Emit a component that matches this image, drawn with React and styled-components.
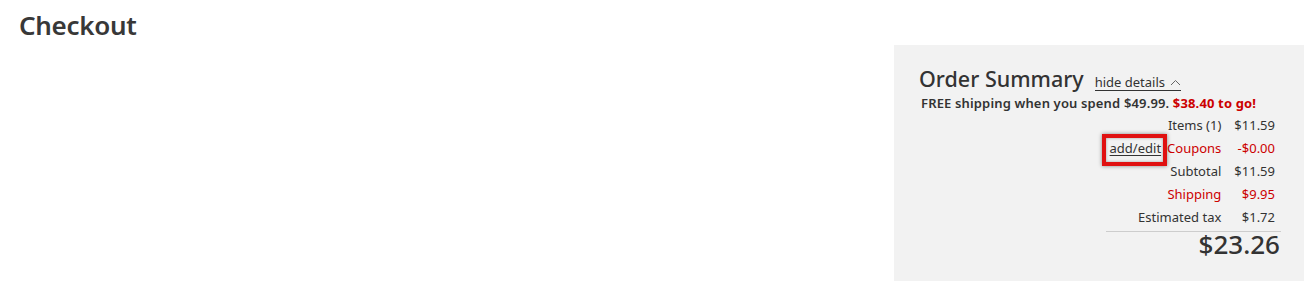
import React from "react";
import styled, { createGlobalStyle } from "styled-components";

const Global = createGlobalStyle`
  html, body { margin: 0; padding: 0; background: #fff; }
  body { font-family: "Noto Sans", "Open Sans", sans-serif; color: #333; }
`;

const Page = styled.div`
  width: 1316px;
  height: 287px;
  box-sizing: border-box;
  padding: 6px 12px 0 19px;
  display: flex;
  flex-direction: column;
`;

const Title = styled.h1`
  margin: 0;
  font-size: 26px;
  line-height: 38px;
  font-weight: 600;
  color: #383838;
  letter-spacing: -0.3px;
`;

const Content = styled.div`
  display: flex;
  justify-content: flex-end;
`;

const Panel = styled.section`
  width: 410px;
  height: 236px;
  margin-top: 1px;
  box-sizing: border-box;
  background: #f2f2f2;
  padding: 19px 24px 0 25px;
  display: flex;
  flex-direction: column;
`;

const HeadRow = styled.div`
  display: flex;
  align-items: baseline;
  gap: 11px;
`;

const PanelTitle = styled.h2`
  margin: 0;
  font-size: 21.5px;
  line-height: 30px;
  font-weight: 500;
  color: #333;
`;

const Toggle = styled.a`
  font-size: 13px;
  color: #333;
  display: inline-flex;
  align-items: center;
  gap: 5px;
  border-bottom: 1px solid #333;
  line-height: 16px;
  cursor: pointer;
`;

const Promo = styled.p`
  margin: 0 0 0 2px;
  font-size: 13px;
  line-height: 18px;
  font-weight: 600;
  letter-spacing: 0.15px;
  color: #333;
`;

const Red = styled.span`
  color: #cc0000;
  font-weight: 700;
`;

const Rows = styled.div`
  margin-top: 2px;
  display: grid;
  grid-template-columns: 1fr auto;
  column-gap: 11px;
  padding-right: 5px;
`;

const Label = styled.div`
  font-size: 13px;
  line-height: 23px;
  text-align: right;
  color: ${(p) => (p.$red ? "#cc0000" : "#333")};
  display: flex;
  justify-content: flex-end;
  align-items: center;
  gap: 6px;
  padding-right: 2px;
`;

const Value = styled.div`
  font-size: 13px;
  line-height: 23px;
  text-align: right;
  color: ${(p) => (p.$red ? "#cc0000" : "#333")};
`;

const EditLink = styled.a`
  position: relative;
  color: #333;
  text-decoration: underline;
  text-underline-offset: 2px;
  cursor: pointer;
`;

const Highlight = styled.span`
  position: absolute;
  left: -8px;
  right: -6px;
  top: -3px;
  bottom: -6px;
  border: 4px solid #e01010;
  box-shadow: 0 0 4px rgba(0, 0, 0, 0.45), inset 0 0 3px rgba(0, 0, 0, 0.35);
  pointer-events: none;
`;

const TotalBox = styled.div`
  margin-left: 187px;
  width: 174px;
  border-top: 1px solid #cdcdcd;
  margin-top: 2px;
  text-align: right;
  font-size: 26px;
  line-height: 24px;
  font-weight: 500;
  color: #333;
  padding-right: 1px;
`;

const rows = [
  { label: "Items (1)", value: "$11.59" },
  { label: "Coupons", value: "-$0.00", red: true, edit: true },
  { label: "Subtotal", value: "$11.59" },
  { label: "Shipping", value: "$9.95", red: true },
  { label: "Estimated tax", value: "$1.72" },
];

export default function App() {
  return (
    <>
      <Global />
      <Page>
        <Title>Checkout</Title>
        <Content>
          <Panel>
            <HeadRow>
              <PanelTitle>Order Summary</PanelTitle>
              <Toggle>
                hide details
                <svg width="11" height="7" viewBox="0 0 11 7" fill="none">
                  <path d="M1 6 L5.5 1.5 L10 6" stroke="#666" strokeWidth="1" />
                </svg>
              </Toggle>
            </HeadRow>
            <Promo>
              FREE shipping when you spend $49.99. <Red>$38.40 to go!</Red>
            </Promo>
            <Rows>
              {rows.map((r) => (
                <React.Fragment key={r.label}>
                  <Label $red={r.red}>
                    {r.edit && (
                      <EditLink>
                        add/edit
                        <Highlight />
                      </EditLink>
                    )}
                    <span>{r.label}</span>
                  </Label>
                  <Value $red={r.red}>{r.value}</Value>
                </React.Fragment>
              ))}
            </Rows>
            <TotalBox>$23.26</TotalBox>
          </Panel>
        </Content>
      </Page>
    </>
  );
}
